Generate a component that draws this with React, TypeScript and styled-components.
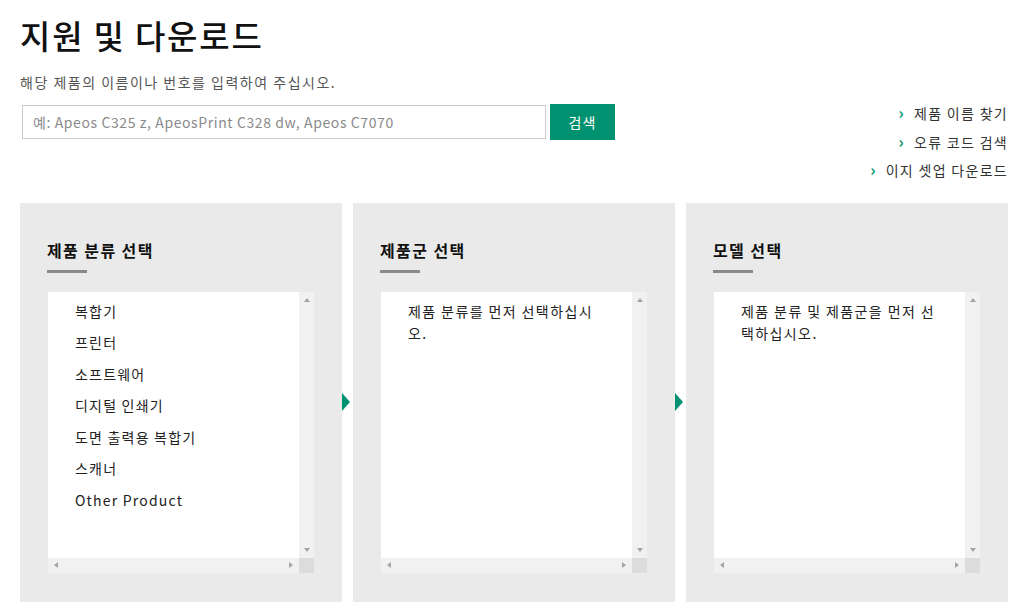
import React from 'react';
import styled, { createGlobalStyle } from 'styled-components';

const GlobalStyle = createGlobalStyle`
  html, body {
    margin: 0;
    padding: 0;
    background: #ffffff;
    font-family: "Noto Sans CJK KR", "Noto Sans", sans-serif;
    color: #333333;
  }
`

const green = '#009270'

const Page = styled.div`
  width: 988px;
  padding: 15px 16px 0 20px;
`

const Title = styled.h1`
  margin: 0;
  font-size: 33px;
  line-height: 40px;
  font-weight: 500;
  color: #111111;
  letter-spacing: 1.8px;
`

const Lead = styled.p`
  margin: 17px 0 0;
  font-size: 14px;
  line-height: 20px;
  color: #555555;
  letter-spacing: 1.5px;
`

const SearchRow = styled.div`
  margin-top: 7px;
  display: flex;
  justify-content: space-between;
  align-items: flex-start;
`

const SearchForm = styled.form`
  margin-top: 5px;
  display: flex;
  gap: 4px;
`

const SearchInput = styled.input`
  box-sizing: border-box;
  width: 524px;
  height: 34px;
  margin: 1px 0 0 2px;
  padding: 0 10px;
  border: 1px solid #cccccc;
  font-family: inherit;
  font-size: 14px;
  letter-spacing: 0.6px;
  color: #333333;
  outline: none;

  &::placeholder {
    color: #8a8a8a;
  }
`

const SearchButton = styled.button`
  width: 65px;
  height: 36px;
  border: 0;
  background: ${green};
  color: #ffffff;
  font-family: inherit;
  font-size: 14px;
  letter-spacing: 1.2px;
  cursor: pointer;
`

const Links = styled.ul`
  list-style: none;
  margin: 0;
  padding: 0;
  text-align: right;
`

const LinkItem = styled.li`
  height: 28.5px;
  font-size: 14px;
  line-height: 28px;
  color: #333333;
  letter-spacing: 1.3px;

  &::before {
    content: '›';
    display: inline-block;
    line-height: 1;
    color: ${green};
    font-weight: 700;
    font-size: 16px;
    margin-right: 9px;
  }
`

const Panels = styled.div`
  margin-top: 18px;
  display: flex;
  align-items: center;
`

const Panel = styled.section`
  width: 322px;
  box-sizing: border-box;
  padding: 36px 28px 29px 27px;
  background: #eaeaea;
`

const PanelTitle = styled.h2`
  margin: 0;
  font-size: 16px;
  line-height: 22px;
  font-weight: 700;
  color: #111111;
  letter-spacing: 1.4px;
`

const Underline = styled.div`
  margin-top: 9px;
  width: 40px;
  height: 3px;
  background: #8a8a8a;
`

const Step = styled.div`
  width: 11px;
  display: flex;
  align-items: center;
`

const StepArrow = styled.span`
  width: 0;
  height: 0;
  border-top: 9px solid transparent;
  border-bottom: 9px solid transparent;
  border-left: 8px solid ${green};
`

const ScrollBox = styled.div`
  margin: 19px 0 0 1px;
  height: 281px;
  display: grid;
  grid-template-columns: 1fr 15px;
  grid-template-rows: 1fr 15px;
  background: #ffffff;
`

const BoxContent = styled.div`
  padding: 4px 26px 0 27px;
  overflow: hidden;
`

const VBar = styled.div`
  background: #f1f1f1;
  display: flex;
  flex-direction: column;
  justify-content: space-between;
  align-items: center;
  padding: 6px 0;
`

const HBar = styled.div`
  background: #f1f1f1;
  display: flex;
  justify-content: space-between;
  align-items: center;
  padding: 0 6px;
`

const Corner = styled.div`
  background: #dcdcdc;
`

const Tri = styled.span<{ dir: 'up' | 'down' | 'left' | 'right' }>`
  width: 0;
  height: 0;
  ${p => p.dir === 'up' && `border-left: 3.5px solid transparent; border-right: 3.5px solid transparent; border-bottom: 4px solid #a3a3a3;`}
  ${p => p.dir === 'down' && `border-left: 3.5px solid transparent; border-right: 3.5px solid transparent; border-top: 4px solid #a3a3a3;`}
  ${p => p.dir === 'left' && `border-top: 3.5px solid transparent; border-bottom: 3.5px solid transparent; border-right: 4px solid #a3a3a3;`}
  ${p => p.dir === 'right' && `border-top: 3.5px solid transparent; border-bottom: 3.5px solid transparent; border-left: 4px solid #a3a3a3;`}
`

const ItemList = styled.ul`
  list-style: none;
  margin: 0;
  padding: 0;
`

const Item = styled.li`
  font-size: 14px;
  line-height: 31.5px;
  color: #222222;
  letter-spacing: 1.2px;
  white-space: nowrap;
`

const Notice = styled.p`
  margin: 0;
  padding-top: 4px;
  font-size: 14px;
  line-height: 22px;
  color: #222222;
  letter-spacing: 1.4px;
  line-break: anywhere;
`

const Box: React.FC<{ children: React.ReactNode }> = ({ children }) => (
  <ScrollBox>
    <BoxContent>{children}</BoxContent>
    <VBar>
      <Tri dir="up" />
      <Tri dir="down" />
    </VBar>
    <HBar>
      <Tri dir="left" />
      <Tri dir="right" />
    </HBar>
    <Corner />
  </ScrollBox>
)

const categories = ['복합기', '프린터', '소프트웨어', '디지털 인쇄기', '도면 출력용 복합기', '스캐너', 'Other Product']

export default function App() {
  return (
    <>
      <GlobalStyle />
      <Page>
        <Title>지원 및 다운로드</Title>
        <Lead>해당 제품의 이름이나 번호를 입력하여 주십시오.</Lead>
        <SearchRow>
          <SearchForm onSubmit={e => e.preventDefault()}>
            <SearchInput placeholder="예: Apeos C325 z, ApeosPrint C328 dw, Apeos C7070" />
            <SearchButton type="submit">검색</SearchButton>
          </SearchForm>
          <Links>
            <LinkItem>제품 이름 찾기</LinkItem>
            <LinkItem>오류 코드 검색</LinkItem>
            <LinkItem>이지 셋업 다운로드</LinkItem>
          </Links>
        </SearchRow>
        <Panels>
          <Panel>
            <PanelTitle>제품 분류 선택</PanelTitle>
            <Underline />
            <Box>
              <ItemList>
                {categories.map(c => <Item key={c}>{c}</Item>)}
              </ItemList>
            </Box>
          </Panel>
          <Step><StepArrow /></Step>
          <Panel>
            <PanelTitle>제품군 선택</PanelTitle>
            <Underline />
            <Box>
              <Notice>제품 분류를 먼저 선택하십시오.</Notice>
            </Box>
          </Panel>
          <Step><StepArrow /></Step>
          <Panel>
            <PanelTitle>모델 선택</PanelTitle>
            <Underline />
            <Box>
              <Notice>제품 분류 및 제품군을 먼저 선택하십시오.</Notice>
            </Box>
          </Panel>
        </Panels>
      </Page>
    </>
  )
}
